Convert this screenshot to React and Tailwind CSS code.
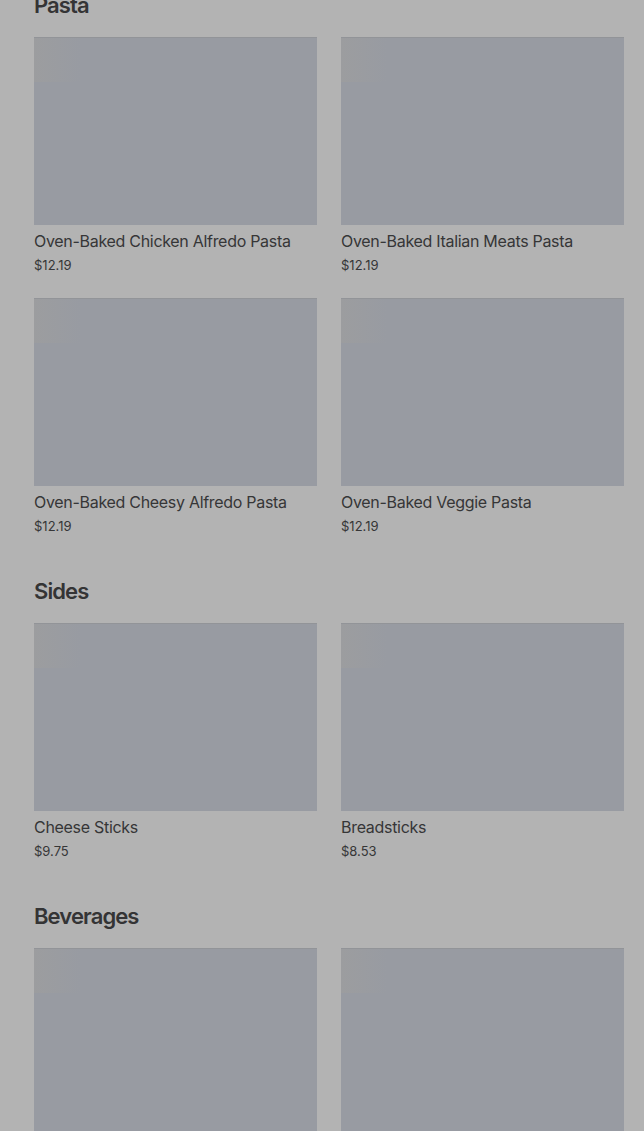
import React from "react";

const sections = [
  {
    title: "Pasta",
    items: [
      { name: "Oven-Baked Chicken Alfredo Pasta", price: "$12.19" },
      { name: "Oven-Baked Italian Meats Pasta", price: "$12.19" },
      { name: "Oven-Baked Cheesy Alfredo Pasta", price: "$12.19" },
      { name: "Oven-Baked Veggie Pasta", price: "$12.19" },
    ],
  },
  {
    title: "Sides",
    items: [
      { name: "Cheese Sticks", price: "$9.75" },
      { name: "Breadsticks", price: "$8.53" },
    ],
  },
  {
    title: "Beverages",
    items: [{ name: "" }, { name: " " }],
  },
];

function Card({ item }) {
  return (
    <div className="flex flex-col">
      <div className="relative h-[188px] bg-[#989ba2] border-t border-[#929498] overflow-hidden">
        <div className="absolute left-0 top-0 h-[44px] w-[46px] bg-gradient-to-r from-[#9c9d9f] to-[#989ba2]" />
      </div>
      {item.price && (
        <>
          <div className="mt-[4px] text-[16px] leading-[24px] text-[#363637] tracking-[-0.3px]">
            {item.name}
          </div>
          <div className="mt-[2px] text-[13px] leading-[20px] text-[#363637]">
            {item.price}
          </div>
        </>
      )}
    </div>
  );
}

export default function App() {
  return (
    <div
      className="h-[1131px] overflow-hidden bg-[#b3b3b3] pl-[34px] pr-[20px]"
      style={{ fontFamily: "Inter, 'Liberation Sans', sans-serif" }}
    >
      <div className="mt-[-9px] flex flex-col gap-[41px]">
        {sections.map((s) => (
          <section key={s.title} className="flex flex-col">
            <h2 className="text-[22px] leading-[28px] font-semibold tracking-[-0.9px] text-[#343435]">
              {s.title}
            </h2>
            <div className="mt-[18px] grid grid-cols-2 gap-x-[24px] gap-y-[23px]">
              {s.items.map((it, i) => (
                <Card key={i} item={it} />
              ))}
            </div>
          </section>
        ))}
      </div>
    </div>
  );
}
